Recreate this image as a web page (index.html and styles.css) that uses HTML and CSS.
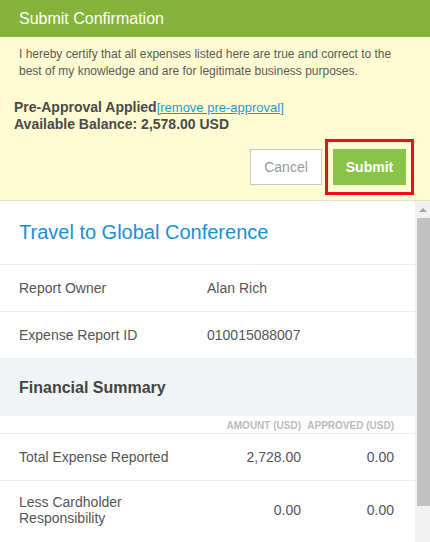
FILE: index.html
```html
<!DOCTYPE html>
<html>
<head>
<meta charset="utf-8">
<link rel="stylesheet" href="styles.css">
</head>
<body>
<div class="header">Submit Confirmation</div>
<div class="confirm">
  <p class="cert">I hereby certify that all expenses listed here are true and correct to the best of my knowledge and are for legitimate business purposes.</p>
  <div class="preapp">
    <div>Pre-Approval Applied<a class="link" href="#">[remove pre-approval]</a></div>
    <div>Available Balance: 2,578.00 USD</div>
  </div>
  <div class="actions">
    <button class="btn cancel">Cancel</button>
    <div class="highlight"><button class="btn submit">Submit</button></div>
  </div>
</div>
<div class="body">
  <div class="main">
    <div class="title">Travel to Global Conference</div>
    <div class="info"><span>Report Owner</span><span>Alan Rich</span></div>
    <div class="info"><span>Expense Report ID</span><span>010015088007</span></div>
    <div class="section">Financial Summary</div>
    <div class="fin colhead"><span></span><span>AMOUNT (USD)</span><span>APPROVED (USD)</span></div>
    <div class="fin"><span>Total Expense Reported</span><span>2,728.00</span><span>0.00</span></div>
    <div class="fin tall"><span>Less Cardholder<br>Responsibility</span><span>0.00</span><span>0.00</span></div>
  </div>
  <div class="scrollbar">
    <div class="arrow"></div>
    <div class="thumb"></div>
  </div>
</div>
</body>
</html>
```
FILE: styles.css
```css
* { box-sizing: border-box; }
html, body { margin: 0; padding: 0; }
body {
  width: 430px;
  height: 542px;
  overflow: hidden;
  font-family: "Liberation Sans", Arial, sans-serif;
  color: #555;
  background: #fff;
}
.header {
  height: 37px;
  line-height: 37px;
  background: #86b33b;
  color: #fff;
  font-size: 16px;
  padding-left: 19px;
}
.confirm {
  background: #fffbd2;
  border-bottom: 1px solid #e0e0d0;
  padding: 9px 16px 8px 14px;
  height: 164px;
}
.cert {
  margin: 0 0 19px 5px;
  font-size: 12px;
  line-height: 17px;
  color: #5a5a5a;
}
.preapp {
  font-size: 14px;
  font-weight: bold;
  line-height: 16px;
  color: #4a4a4a;
}
.link {
  font-weight: normal;
  font-size: 13px;
  color: #1a9bd7;
  text-decoration: underline;
}
.actions {
  display: flex;
  justify-content: flex-end;
  align-items: center;
  gap: 3px;
  margin-top: 7px;
}
.btn {
  font-family: "Liberation Sans", Arial, sans-serif;
  font-size: 14px;
  height: 36px;
  padding: 0;
  cursor: pointer;
}
.cancel {
  width: 72px;
  background: #fff;
  border: 1px solid #c8c8c8;
  color: #999;
}
.highlight {
  border: 3px solid #e8121a;
  padding: 7px 5px 7px 5px;
}
.submit {
  width: 73px;
  background: #8bc34a;
  border: none;
  color: #fff;
  font-weight: bold;
}
.body {
  display: flex;
  height: 341px;
}
.main {
  flex: 1;
}
.title {
  height: 64px;
  display: flex;
  align-items: center;
  padding-left: 19px;
  font-size: 20px;
  color: #1a8fd6;
  border-bottom: 1px solid #eee;
}
.info {
  display: grid;
  grid-template-columns: 188px 1fr;
  height: 47px;
  align-items: center;
  padding-left: 19px;
  font-size: 14px;
  border-bottom: 1px solid #eee;
}
.info:last-of-type { border-bottom: none; }
.section {
  height: 57px;
  display: flex;
  align-items: center;
  padding-left: 19px;
  background: #f0f4f7;
  font-size: 16px;
  font-weight: bold;
  color: #444;
}
.fin {
  display: grid;
  grid-template-columns: 1fr 94px 93px;
  align-items: center;
  height: 47px;
  padding: 0 21px 0 19px;
  font-size: 14px;
  border-bottom: 1px solid #eee;
}
.fin span:nth-child(2), .fin span:nth-child(3) { text-align: right; }
.fin.colhead {
  height: 18px;
  font-size: 10px;
  font-weight: bold;
  color: #bbb;
  padding-top: 1px;
}
.fin.tall {
  height: 58px;
  line-height: 16px;
  padding-top: 0;
  border-bottom: none;
}
.scrollbar {
  width: 15px;
  background: #f1f1f1;
  display: flex;
  flex-direction: column;
  align-items: flex-end;
}
.arrow {
  width: 15px;
  height: 17px;
  display: flex;
  justify-content: center;
  align-items: center;
}
.arrow::before {
  content: "";
  border-left: 4px solid transparent;
  border-right: 4px solid transparent;
  border-bottom: 4px solid #a3a3a3;
  margin-left: 1px;
}
.thumb {
  width: 13px;
  height: 288px;
  background: #c1c1c1;
}
```
